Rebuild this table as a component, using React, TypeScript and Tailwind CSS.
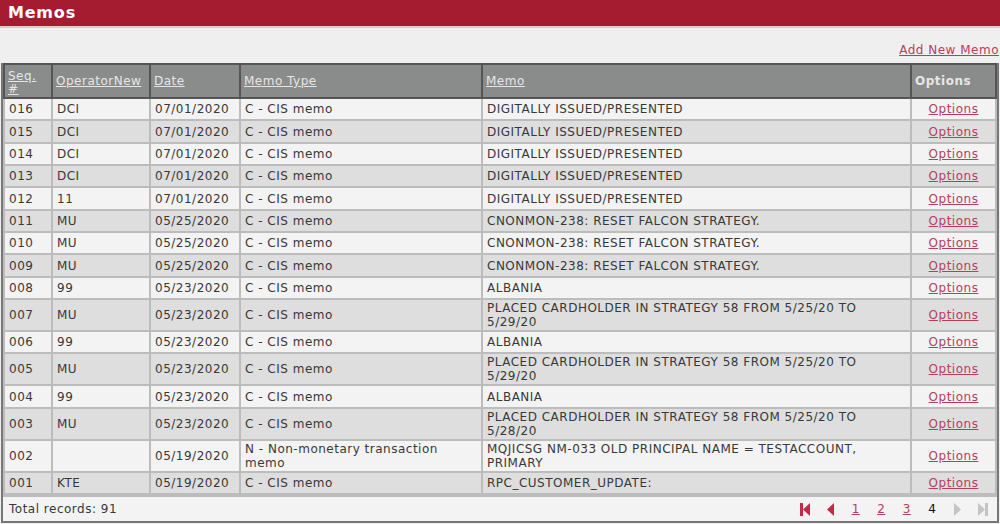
import React from 'react';

interface Memo {
  seq: string;
  operator: string;
  date: string;
  type: string;
  memo: string;
}

const memos: Memo[] = [
  { seq: '016', operator: 'DCI', date: '07/01/2020', type: 'C - CIS memo', memo: 'DIGITALLY ISSUED/PRESENTED' },
  { seq: '015', operator: 'DCI', date: '07/01/2020', type: 'C - CIS memo', memo: 'DIGITALLY ISSUED/PRESENTED' },
  { seq: '014', operator: 'DCI', date: '07/01/2020', type: 'C - CIS memo', memo: 'DIGITALLY ISSUED/PRESENTED' },
  { seq: '013', operator: 'DCI', date: '07/01/2020', type: 'C - CIS memo', memo: 'DIGITALLY ISSUED/PRESENTED' },
  { seq: '012', operator: '11', date: '07/01/2020', type: 'C - CIS memo', memo: 'DIGITALLY ISSUED/PRESENTED' },
  { seq: '011', operator: 'MU', date: '05/25/2020', type: 'C - CIS memo', memo: 'CNONMON-238: RESET FALCON STRATEGY.' },
  { seq: '010', operator: 'MU', date: '05/25/2020', type: 'C - CIS memo', memo: 'CNONMON-238: RESET FALCON STRATEGY.' },
  { seq: '009', operator: 'MU', date: '05/25/2020', type: 'C - CIS memo', memo: 'CNONMON-238: RESET FALCON STRATEGY.' },
  { seq: '008', operator: '99', date: '05/23/2020', type: 'C - CIS memo', memo: 'ALBANIA' },
  { seq: '007', operator: 'MU', date: '05/23/2020', type: 'C - CIS memo', memo: 'PLACED CARDHOLDER IN STRATEGY 58 FROM 5/25/20 TO\n5/29/20' },
  { seq: '006', operator: '99', date: '05/23/2020', type: 'C - CIS memo', memo: 'ALBANIA' },
  { seq: '005', operator: 'MU', date: '05/23/2020', type: 'C - CIS memo', memo: 'PLACED CARDHOLDER IN STRATEGY 58 FROM 5/25/20 TO\n5/29/20' },
  { seq: '004', operator: '99', date: '05/23/2020', type: 'C - CIS memo', memo: 'ALBANIA' },
  { seq: '003', operator: 'MU', date: '05/23/2020', type: 'C - CIS memo', memo: 'PLACED CARDHOLDER IN STRATEGY 58 FROM 5/25/20 TO\n5/28/20' },
  { seq: '002', operator: '', date: '05/19/2020', type: 'N - Non-monetary transaction\nmemo', memo: 'MQJICSG NM-033 OLD PRINCIPAL NAME = TESTACCOUNT,\nPRIMARY' },
  { seq: '001', operator: 'KTE', date: '05/19/2020', type: 'C - CIS memo', memo: 'RPC_CUSTOMER_UPDATE:' },
];

const th = 'border-2 border-[#555] px-[3px] text-left font-normal align-middle';
const td = 'border-2 border-[#bcbcbc] px-[4px] py-[1px] h-[22.35px] whitespace-pre-line align-middle';

const Arrow = ({ dir, bar, color }: { dir: 'left' | 'right'; bar?: boolean; color: string }) => (
  <svg width="12" height="15" viewBox="0 0 12 15">
    {dir === 'left' ? (
      <>
        {bar && <rect x="1" y="1" width="3" height="13" fill={color} />}
        <polygon points={bar ? '4,7.5 11,1 11,14' : '3,7.5 10,1 10,14'} fill={color} />
      </>
    ) : (
      <>
        <polygon points={bar ? '1,1 8,7.5 1,14' : '2,1 9,7.5 2,14'} fill={color} />
        {bar && <rect x="8" y="1" width="3" height="13" fill={color} />}
      </>
    )}
  </svg>
);

const pageBox = 'w-[25.5px] flex items-center justify-center';

export default function App() {
  return (
    <div className="w-[1000px] h-[524px] bg-[#efefef] text-[#383838] text-[12px] tracking-[0.5px] leading-[14px] overflow-hidden" style={{ fontFamily: '"DejaVu Sans", Verdana, sans-serif' }}>
      <div className="h-[28px] bg-[#a51c30] border-b-2 border-[#e9c6cc] flex items-center px-[8px]">
        <span className="text-white font-bold text-[16px] tracking-[0.8px]">Memos</span>
      </div>
      <div className="h-[35px] flex items-end justify-end pb-[6px] pr-[1px]">
        <a href="#" className="text-[#b5405e] underline">Add New Memo</a>
      </div>
      <div className="mx-[1px] border-2 border-[#777] border-t-0">
        <table className="w-full border-collapse table-fixed">
          <colgroup>
            <col className="w-[48px]" />
            <col className="w-[98px]" />
            <col className="w-[90px]" />
            <col className="w-[242px]" />
            <col />
            <col className="w-[85px]" />
          </colgroup>
          <thead>
            <tr className="bg-[#8a8b8b] text-[#e6e6e6] h-[34px]">
              <th className={th}><a href="#" className="underline leading-[13px] block pt-[4px]">Seq.<br />#</a></th>
              <th className={th}><a href="#" className="underline">OperatorNew</a></th>
              <th className={th}><a href="#" className="underline">Date</a></th>
              <th className={th}><a href="#" className="underline">Memo Type</a></th>
              <th className={th}><a href="#" className="underline">Memo</a></th>
              <th className={th + ' font-semibold'}>Options</th>
            </tr>
          </thead>
          <tbody>
            {memos.map((m, i) => (
              <tr key={m.seq} className={i % 2 === 0 ? 'bg-[#f3f3f3]' : 'bg-[#dedede]'}>
                <td className={td}>{m.seq}</td>
                <td className={td}>{m.operator}</td>
                <td className={td}>{m.date}</td>
                <td className={td}>{m.type}</td>
                <td className={td}>{m.memo}</td>
                <td className={td + ' text-center'}>
                  <a href="#" className="text-[#b5405e] underline">Options</a>
                </td>
              </tr>
            ))}
          </tbody>
        </table>
        <div className="h-[26px] flex items-center justify-between pl-[6px] pr-[1px] border-t-2 border-[#bcbcbc] bg-[#f3f3f3]">
          <span>Total records: 91</span>
          <div className="flex items-center">
            <span className={pageBox}><Arrow dir="left" bar color="#c22a48" /></span>
            <span className={pageBox}><Arrow dir="left" color="#c22a48" /></span>
            <a href="#" className={pageBox + ' text-[#b5405e] underline'}>1</a>
            <a href="#" className={pageBox + ' text-[#b5405e] underline'}>2</a>
            <a href="#" className={pageBox + ' text-[#b5405e] underline'}>3</a>
            <span className={pageBox + ' text-[#111]'}>4</span>
            <span className={pageBox}><Arrow dir="right" color="#c4c4c4" /></span>
            <span className={pageBox}><Arrow dir="right" bar color="#c4c4c4" /></span>
          </div>
        </div>
      </div>
    </div>
  );
}
